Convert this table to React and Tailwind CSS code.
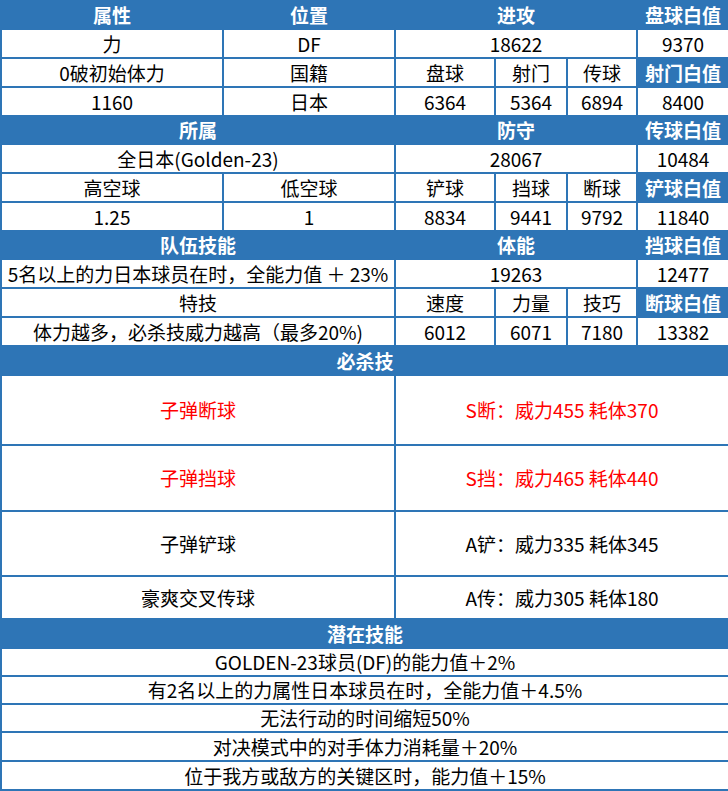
import React from 'react';

const cell = 'border-2 border-[#2e75b6] text-center align-middle p-0 pb-px whitespace-nowrap';
const head = `${cell} bg-[#2e75b6] text-white font-bold`;

const skills = [
  { name: '子弹断球', desc: 'S断：威力455 耗体370', red: true, h: 'h-[70px]' },
  { name: '子弹挡球', desc: 'S挡：威力465 耗体440', red: true, h: 'h-[66px]' },
  { name: '子弹铲球', desc: 'A铲：威力335 耗体345', red: false, h: 'h-[65px]' },
  { name: '豪爽交叉传球', desc: 'A传：威力305 耗体180', red: false, h: 'h-[43px]' },
];

const passives = [
  { text: 'GOLDEN-23球员(DF)的能力值＋2%', h: 'h-[28px]' },
  { text: '有2名以上的力属性日本球员在时，全能力值＋4.5%', h: 'h-[28px]' },
  { text: '无法行动的时间缩短50%', h: 'h-[28px]' },
  { text: '对决模式中的对手体力消耗量＋20%', h: 'h-[29px]' },
  { text: '位于我方或敌方的关键区时，能力值＋15%', h: 'h-[29px]' },
];

function App() {
  return (
    <div className="w-[728px] bg-white text-black text-[19px] leading-none" style={{ fontFamily: '"Noto Sans CJK SC", "Noto Sans", sans-serif' }}>
      <table className="w-[728px] border-collapse table-fixed">
        <colgroup>
          <col className="w-[222px]" />
          <col className="w-[172px]" />
          <col className="w-[100px]" />
          <col className="w-[72px]" />
          <col className="w-[70px]" />
          <col className="w-[92px]" />
        </colgroup>
        <tbody>
          <tr className="h-[28px]">
            <td className={head}>属性</td>
            <td className={head}>位置</td>
            <td className={head} colSpan={3}>进攻</td>
            <td className={head}>盘球白值</td>
          </tr>
          <tr className="h-[29px]">
            <td className={cell}>力</td>
            <td className={cell}>DF</td>
            <td className={cell} colSpan={3}>18622</td>
            <td className={cell}>9370</td>
          </tr>
          <tr className="h-[29px]">
            <td className={cell}>0破初始体力</td>
            <td className={cell}>国籍</td>
            <td className={cell}>盘球</td>
            <td className={cell}>射门</td>
            <td className={cell}>传球</td>
            <td className={head}>射门白值</td>
          </tr>
          <tr className="h-[29px]">
            <td className={cell}>1160</td>
            <td className={cell}>日本</td>
            <td className={cell}>6364</td>
            <td className={cell}>5364</td>
            <td className={cell}>6894</td>
            <td className={cell}>8400</td>
          </tr>

          <tr className="h-[28px]">
            <td className={head} colSpan={2}>所属</td>
            <td className={head} colSpan={3}>防守</td>
            <td className={head}>传球白值</td>
          </tr>
          <tr className="h-[29px]">
            <td className={cell} colSpan={2}>全日本(Golden-23)</td>
            <td className={cell} colSpan={3}>28067</td>
            <td className={cell}>10484</td>
          </tr>
          <tr className="h-[29px]">
            <td className={cell}>高空球</td>
            <td className={cell}>低空球</td>
            <td className={cell}>铲球</td>
            <td className={cell}>挡球</td>
            <td className={cell}>断球</td>
            <td className={head}>铲球白值</td>
          </tr>
          <tr className="h-[29px]">
            <td className={cell}>1.25</td>
            <td className={cell}>1</td>
            <td className={cell}>8834</td>
            <td className={cell}>9441</td>
            <td className={cell}>9792</td>
            <td className={cell}>11840</td>
          </tr>

          <tr className="h-[28px]">
            <td className={head} colSpan={2}>队伍技能</td>
            <td className={head} colSpan={3}>体能</td>
            <td className={head}>挡球白值</td>
          </tr>
          <tr className="h-[29px]">
            <td className={cell} colSpan={2}>5名以上的力日本球员在时，全能力值 ＋ 23%</td>
            <td className={cell} colSpan={3}>19263</td>
            <td className={cell}>12477</td>
          </tr>
          <tr className="h-[29px]">
            <td className={cell} colSpan={2}>特技</td>
            <td className={cell}>速度</td>
            <td className={cell}>力量</td>
            <td className={cell}>技巧</td>
            <td className={head}>断球白值</td>
          </tr>
          <tr className="h-[29px]">
            <td className={cell} colSpan={2}>体力越多，必杀技威力越高（最多20%)</td>
            <td className={cell}>6012</td>
            <td className={cell}>6071</td>
            <td className={cell}>7180</td>
            <td className={cell}>13382</td>
          </tr>

          <tr className="h-[29px]">
            <td className={head} colSpan={6}>必杀技</td>
          </tr>
          {skills.map((skill) => (
            <tr key={skill.name} className={skill.h}>
              <td className={`${cell} ${skill.red ? 'text-[#ff0000]' : ''}`} colSpan={2}>{skill.name}</td>
              <td className={`${cell} ${skill.red ? 'text-[#ff0000]' : ''}`} colSpan={4}>{skill.desc}</td>
            </tr>
          ))}

          <tr className="h-[29px]">
            <td className={head} colSpan={6}>潜在技能</td>
          </tr>
          {passives.map((item) => (
            <tr key={item.text} className={item.h}>
              <td className={cell} colSpan={6}>{item.text}</td>
            </tr>
          ))}
        </tbody>
      </table>
    </div>
  );
}

export default App;
